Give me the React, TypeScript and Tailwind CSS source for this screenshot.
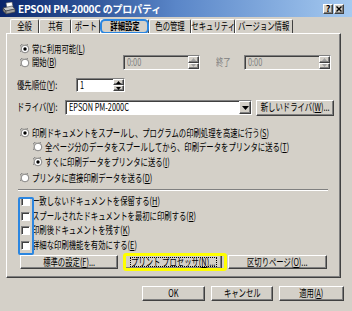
import React from "react";

const raised =
  "bg-[#d4d0c8] border border-t-white border-l-white border-r-[#404040] border-b-[#404040] shadow-[inset_-1px_-1px_0_#808080]";
const sunken =
  "border border-t-[#808080] border-l-[#808080] border-r-white border-b-white shadow-[inset_1px_1px_0_#404040]";

function U({ c }: { c: string }) {
  return <span className="underline underline-offset-1">{c}</span>;
}

function T({
  children,
  center,
  className = "",
}: {
  children: React.ReactNode;
  center?: boolean;
  className?: string;
}) {
  return (
    <span
      className={
        (center ? "inline-block scale-x-[0.7] " : "inline-block origin-left scale-x-[0.7] ") + className
      }
    >
      {children}
    </span>
  );
}

function Radio({ on }: { on?: boolean }) {
  return (
    <svg width="10" height="10" viewBox="0 0 10 10" className="shrink-0">
      <path d="M1 8A4.5 4.5 0 0 1 8 1" fill="none" stroke="#808080" />
      <circle cx="5" cy="5" r="3.8" fill="#fff" stroke="#404040" strokeWidth="0.6" />
      {on && <circle cx="5" cy="5" r="1.7" fill="#000" />}
    </svg>
  );
}

function Check() {
  return <div className={"w-[9px] h-[9px] bg-white shrink-0 " + sunken} />;
}

function Spin({ disabled }: { disabled?: boolean }) {
  const c = disabled ? "#a0a0a0" : "#000";
  return (
    <div className="flex flex-col w-[11px] h-full shrink-0">
      <div className={"flex-1 flex items-center justify-center " + raised}>
        <svg width="5" height="3" viewBox="0 0 5 3">
          <path d="M2.5 0L5 3H0z" fill={c} />
        </svg>
      </div>
      <div className={"flex-1 flex items-center justify-center " + raised}>
        <svg width="5" height="3" viewBox="0 0 5 3">
          <path d="M0 0H5L2.5 3z" fill={c} />
        </svg>
      </div>
    </div>
  );
}

function PrinterIcon() {
  return (
    <svg width="14" height="13" viewBox="0 0 14 13" className="shrink-0">
      <path d="M4 1L10 0L11 5L5 6z" fill="#fff" stroke="#606060" strokeWidth="0.6" />
      <path d="M1 6L10 4L13 7L4 9z" fill="#c8c8c8" stroke="#404040" strokeWidth="0.6" />
      <path d="M1 6L4 9L4 12L1 9z" fill="#808080" stroke="#404040" strokeWidth="0.6" />
      <path d="M4 9L13 7L13 10L4 12z" fill="#a0a0a0" stroke="#404040" strokeWidth="0.6" />
    </svg>
  );
}

const tabs = [
  { t: "全般", w: "w-[29px]" },
  { t: "共有", w: "w-[32px]" },
  { t: "ポート", w: "w-[29px]" },
  { t: "詳細設定", w: "w-[49px]", sel: true },
  { t: "色の管理", w: "w-[42px]" },
  { t: "セキュリティ", w: "w-[44px]" },
  { t: "バージョン情報", w: "w-[58px]" },
];

export default function App() {
  return (
    <div className="w-[352px] h-[311px] bg-[#d4d0c8] overflow-hidden whitespace-nowrap text-black text-[10.5px] leading-none font-['Noto_Sans_CJK_JP','Noto_Sans',sans-serif] flex flex-col">
      {/* Title bar */}
      <div className="h-[17px] shrink-0 bg-linear-to-r from-[#0a246a] via-[#5a86c8] to-[#a6caf0] flex items-center pl-[2px] pr-[8px]">
        <PrinterIcon />
        <span className="ml-[2px] text-white font-bold text-[10px] tracking-[-0.2px]">
          EPSON PM-2000C のプロパティ
        </span>
        <div className="ml-auto flex gap-[1px]">
          <div className={"w-[10px] h-[10px] flex items-center justify-center text-[9px] font-bold " + raised}>
            ?
          </div>
          <div className={"w-[10px] h-[10px] flex items-center justify-center " + raised}>
            <svg width="6" height="6" viewBox="0 0 6 6">
              <path d="M0.5 0.5L5.5 5.5M5.5 0.5L0.5 5.5" stroke="#000" strokeWidth="1.4" />
            </svg>
          </div>
        </div>
      </div>

      {/* Tabs */}
      <div className="mt-[2px] h-[14px] shrink-0 flex pl-[10px]">
        {tabs.map((tb) => (
          <div
            key={tb.t}
            className={
              "relative h-full flex items-center justify-center border-t border-l border-t-white border-l-white border-r border-r-[#404040] rounded-t-[2px] " +
              tb.w
            }
          >
            <T center className={tb.sel ? "font-bold" : ""}>
              {tb.t}
            </T>
            {tb.sel && (
              <div className="absolute -left-[1px] -right-[1px] -top-[1px] -bottom-[1px] border-2 border-[#2b86e0] rounded-[5px]" />
            )}
          </div>
        ))}
      </div>

      {/* Panel */}
      <div className="relative ml-[6px] w-[335px] h-[245px] shrink-0 border border-t-white border-l-white border-r-[#404040] border-b-[#404040] shadow-[inset_-1px_-1px_0_#808080] pt-[9px] pl-[10px] flex flex-col">
        {/* row1 */}
        <div className="h-[12px] flex items-center gap-[2px] pl-[3px]">
          <Radio on />
          <T>
            常に利用可能(<U c="L" />)
          </T>
        </div>
        {/* row2 */}
        <div className="h-[15px] flex items-center">
          <div className="w-[106px] shrink-0 flex items-center gap-[2px] pl-[3px]">
            <Radio />
            <T>
              開始(<U c="B" />)
            </T>
          </div>
          <div className={"w-[77px] shrink-0 h-full flex items-center justify-between pl-[3px] " + sunken}>
            <T className="text-[#808080]">0:00</T>
            <Spin disabled />
          </div>
          <div className="ml-[16px] w-[28px] shrink-0">
            <T className="text-[#808080]">終了</T>
          </div>
          <div className={"w-[87px] shrink-0 h-full flex items-center justify-between pl-[3px] " + sunken}>
            <T className="text-[#808080]">0:00</T>
            <Spin disabled />
          </div>
        </div>
        {/* row3 */}
        <div className="mt-[8px] h-[14px] flex items-center">
          <div className="w-[59px] shrink-0">
            <T>
              優先順位(<U c="Y" />):
            </T>
          </div>
          <div className={"w-[49px] shrink-0 h-full bg-white flex items-center justify-between pl-[3px] " + sunken}>
            <T>1</T>
            <Spin />
          </div>
        </div>
        {/* row4 */}
        <div className="mt-[8px] h-[15px] flex items-center">
          <div className="w-[48px] shrink-0">
            <T>
              ドライバ(<U c="V" />):
            </T>
          </div>
          <div className={"w-[187px] shrink-0 h-full bg-white flex items-center justify-between pl-[3px] " + sunken}>
            <T>EPSON PM-2000C</T>
            <div className={"w-[12px] h-full flex items-center justify-center " + raised}>
              <svg width="7" height="4" viewBox="0 0 7 4">
                <path d="M0 0H7L3.5 4z" fill="#000" />
              </svg>
            </div>
          </div>
          <div className={"ml-[4px] w-[78px] shrink-0 h-[16px] flex items-center justify-center " + raised}>
            <T center>
              新しいドライバ(<U c="W" />)...
            </T>
          </div>
        </div>
        {/* row5 */}
        <div className="mt-[11px] h-[14px] flex items-center gap-[2px] pl-[3px]">
          <Radio on />
          <T>
            印刷ドキュメントをスプールし、プログラムの印刷処理を高速に行う(<U c="S" />)
          </T>
        </div>
        <div className="h-[14px] flex items-center gap-[2px] pl-[16px]">
          <Radio />
          <T>
            全ページ分のデータをスプールしてから、印刷データをプリンタに送る(<U c="T" />)
          </T>
        </div>
        <div className="mt-[1px] h-[14px] flex items-center gap-[2px] pl-[16px]">
          <Radio on />
          <T>
            すぐに印刷データをプリンタに送る(<U c="I" />)
          </T>
        </div>
        <div className="mt-[2px] h-[14px] flex items-center gap-[2px] pl-[3px]">
          <Radio />
          <T>
            プリンタに直接印刷データを送る(<U c="D" />)
          </T>
        </div>
        {/* separator */}
        <div className="mt-[4px] ml-[1px] w-[310px] h-[2px] border-t border-t-[#808080] border-b border-b-white" />
        {/* checks */}
        <div className="mt-[3px] h-[14px] flex items-center gap-[2px] pl-[4px]">
          <Check />
          <T>
            一致しないドキュメントを保留する(<U c="H" />)
          </T>
        </div>
        <div className="mt-[1px] h-[14px] flex items-center gap-[2px] pl-[4px]">
          <Check />
          <T>
            スプールされたドキュメントを最初に印刷する(<U c="R" />)
          </T>
        </div>
        <div className="h-[14px] flex items-center gap-[2px] pl-[4px]">
          <Check />
          <T>
            印刷後ドキュメントを残す(<U c="K" />)
          </T>
        </div>
        <div className="mt-[1px] h-[14px] flex items-center gap-[2px] pl-[4px]">
          <Check />
          <T>
            詳細な印刷機能を有効にする(<U c="E" />)
          </T>
        </div>
        {/* buttons */}
        <div className="mt-[3px] h-[14px] flex pl-[3px]">
          <div className={"w-[98px] shrink-0 h-full flex items-center justify-center " + raised}>
            <T center>
              標準の設定(<U c="F" />)...
            </T>
          </div>
          <div className={"ml-[7px] w-[97px] shrink-0 h-full flex items-center justify-center " + raised}>
            <div className="w-[87px] h-[10px] flex items-center justify-center border border-dotted border-black">
              <T center>
                プリント プロセッサ(<U c="N" />)...
              </T>
            </div>
          </div>
          <div className={"ml-[6px] w-[99px] shrink-0 h-full flex items-center justify-center " + raised}>
            <T center>
              区切りページ(<U c="O" />)...
            </T>
          </div>
        </div>

        {/* highlight overlays */}
        <div className="absolute left-[11px] top-[163px] w-[16px] h-[58px] border-2 border-[#2b86e0] rounded-[2px]" />
        <div className="absolute left-[116px] top-[219px] w-[104px] h-[18px] border-[3px] border-[#ffff00] rounded-[3px]" />
      </div>

      {/* bottom buttons */}
      <div className="mt-[8px] h-[15px] shrink-0 flex justify-end pr-[8px] gap-[6px]">
        <div className={"w-[63px] h-full flex items-center justify-center " + raised}>
          <T center>OK</T>
        </div>
        <div className={"w-[62px] h-full flex items-center justify-center " + raised}>
          <T center>キャンセル</T>
        </div>
        <div className={"w-[65px] h-full flex items-center justify-center " + raised}>
          <T center>
            適用(<U c="A" />)
          </T>
        </div>
      </div>
    </div>
  );
}
